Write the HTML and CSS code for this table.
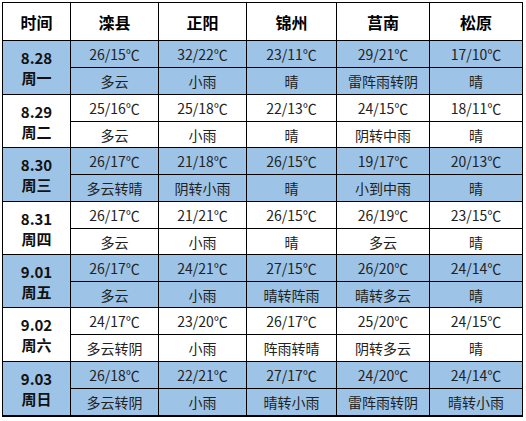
FILE: index.html
```html
<!DOCTYPE html>
<html lang="zh">
<head>
<meta charset="utf-8">
<link rel="stylesheet" href="styles.css">
</head>
<body>
<table class="wx">
  <colgroup>
    <col class="c-time"><col class="c-a"><col class="c-a"><col class="c-b"><col class="c-c"><col class="c-c">
  </colgroup>
  <thead>
    <tr class="head"><th>时间</th><th>滦县</th><th>正阳</th><th>锦州</th><th>莒南</th><th>松原</th></tr>
  </thead>
  <tbody>
    <tr class="blue t"><td class="day" rowspan="2"><div>8.28</div><div>周一</div></td><td>26/15℃</td><td>32/22℃</td><td>23/11℃</td><td>29/21℃</td><td>17/10℃</td></tr>
    <tr class="blue w"><td>多云</td><td>小雨</td><td>晴</td><td>雷阵雨转阴</td><td>晴</td></tr>
    <tr class="t"><td class="day" rowspan="2"><div>8.29</div><div>周二</div></td><td>25/16℃</td><td>25/18℃</td><td>22/13℃</td><td>24/15℃</td><td>18/11℃</td></tr>
    <tr class="w s"><td>多云</td><td>小雨</td><td>晴</td><td>阴转中雨</td><td>晴</td></tr>
    <tr class="blue t"><td class="day" rowspan="2"><div>8.30</div><div>周三</div></td><td>26/17℃</td><td>21/18℃</td><td>26/15℃</td><td>19/17℃</td><td>20/13℃</td></tr>
    <tr class="blue w"><td>多云转晴</td><td>阴转小雨</td><td>晴</td><td>小到中雨</td><td>晴</td></tr>
    <tr class="t"><td class="day" rowspan="2"><div>8.31</div><div>周四</div></td><td>26/17℃</td><td>21/21℃</td><td>26/15℃</td><td>26/19℃</td><td>23/15℃</td></tr>
    <tr class="w s"><td>多云</td><td>小雨</td><td>晴</td><td>多云</td><td>晴</td></tr>
    <tr class="blue t"><td class="day" rowspan="2"><div>9.01</div><div>周五</div></td><td>26/17℃</td><td>24/21℃</td><td>27/15℃</td><td>26/20℃</td><td>24/14℃</td></tr>
    <tr class="blue w s"><td>多云</td><td>小雨</td><td>晴转阵雨</td><td>晴转多云</td><td>晴</td></tr>
    <tr class="t"><td class="day" rowspan="2"><div>9.02</div><div>周六</div></td><td>24/17℃</td><td>23/20℃</td><td>26/17℃</td><td>25/20℃</td><td>24/15℃</td></tr>
    <tr class="w"><td>多云转阴</td><td>小雨</td><td>阵雨转晴</td><td>阴转多云</td><td>晴</td></tr>
    <tr class="blue t"><td class="day" rowspan="2"><div>9.03</div><div>周日</div></td><td>26/18℃</td><td>22/21℃</td><td>27/17℃</td><td>24/20℃</td><td>24/14℃</td></tr>
    <tr class="blue w"><td>多云转阴</td><td>小雨</td><td>晴转小雨</td><td>雷阵雨转阴</td><td>晴转小雨</td></tr>
  </tbody>
</table>
</body>
</html>
```

FILE: styles.css
```css
html, body {
  margin: 0;
  padding: 0;
  background: #ffffff;
}
body {
  padding: 2px 0 0 2px;
  font-family: "Noto Sans CJK SC", "DejaVu Sans", sans-serif;
  color: #1a1a1a;
}
.wx {
  border-collapse: collapse;
  table-layout: fixed;
  width: 521px;
  border: 1px solid #000;
  border-bottom-width: 2px;
}
.c-time { width: 68px; }
.c-a { width: 88px; }
.c-b { width: 90px; }
.c-c { width: 93px; }
.wx th, .wx td {
  border: 1px solid #000;
  padding: 0;
  text-align: center;
  vertical-align: middle;
  line-height: 1;
}
.head th {
  height: 37px;
  font-size: 16px;
  font-weight: 700;
  color: #000;
}
.wx td {
  font-size: 14px;
  font-weight: 400;
  color: #222;
}
.t td { height: 26px; }
.w td { height: 26px; }
.w.s td { height: 25px; }
.wx td.day {
  font-size: 15px;
  font-weight: 700;
  line-height: 1;
  color: #111;
}
.day div + div {
  margin-top: 5px;
}
.blue td { background: #9dc3e6; }
```
